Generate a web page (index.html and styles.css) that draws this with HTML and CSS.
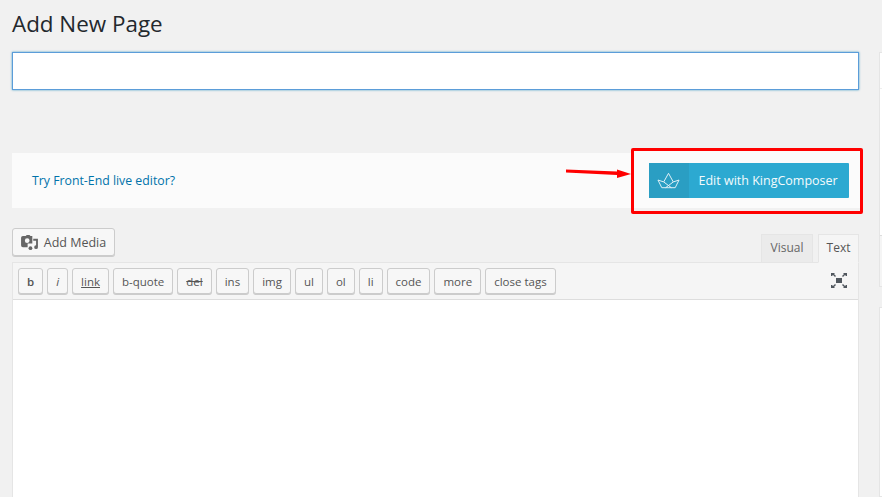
FILE: index.html
```html
<!DOCTYPE html>
<html lang="en">
<head>
  <meta charset="UTF-8" />
  <title>Add New Page</title>
  <link rel="stylesheet" href="styles.css">
</head>
<body>
  <div class="wrap">
    <div class="main">
      <h1>Add New Page</h1>
      <input type="text" class="title-input" />

      <div class="live-bar">
        <a class="live-link" href="#">Try Front-End live editor?</a>
        <div class="highlight">
          <svg class="arrow" width="66" height="14" viewBox="0 0 66 14">
            <path d="M0 3.5 L51 5.5 L51 3.5 L65 8 L51 12 L51 9 L0 6.5 Z" fill="#ff0000" />
          </svg>
          <a class="kc-button" href="#">
            <span class="kc-icon">
              <svg width="23" height="17" viewBox="0 0 24 17" fill="none" stroke="#e6f4f9" stroke-width="1">
                <path d="M1 8 L7 10 L12 1 L17 10 L23 8 L19 16 H5 Z" />
                <path d="M7 10 L15 16 M17 10 L9 16" />
              </svg>
            </span>
            <span class="kc-label">Edit with KingComposer</span>
          </a>
        </div>
      </div>

      <div class="media-row">
        <button class="media-button">
          <svg width="17" height="15" viewBox="0 0 18 16" fill="#666">
            <path d="M2 1 H5 L6 0 H9 L10 1 H12 V9 H7 V13 H2 Q0 13 0 11 V3 Q0 1 2 1 Z M6.5 3.5 A2.5 2.5 0 1 0 6.6 8.5 A2.5 2.5 0 1 0 6.5 3.5 Z" fill-rule="evenodd" />
            <path d="M13 4 H18 V13 A2 2 0 1 1 16 11 V6 H13 Z" />
            <circle cx="10" cy="14" r="2" />
          </svg>
          Add Media
        </button>
        <div class="tabs">
          <span class="tab tab-visual">Visual</span>
          <span class="tab tab-active">Text</span>
        </div>
      </div>

      <div class="editor">
        <div class="toolbar">
          <button class="tool tool-b">b</button>
          <button class="tool tool-i">i</button>
          <button class="tool tool-link">link</button>
          <button class="tool">b-quote</button>
          <button class="tool tool-del">del</button>
          <button class="tool">ins</button>
          <button class="tool">img</button>
          <button class="tool">ul</button>
          <button class="tool">ol</button>
          <button class="tool">li</button>
          <button class="tool">code</button>
          <button class="tool">more</button>
          <button class="tool">close tags</button>
          <svg class="fullscreen" width="16" height="15" viewBox="0 0 16 15" fill="#50575e">
            <rect x="5" y="5" width="6" height="5" />
            <path d="M0 0 H4 L3 1 L5 3 L4 4 L2 2 L1 3 H0 Z" />
            <path d="M16 0 H12 L13 1 L11 3 L12 4 L14 2 L15 3 H16 Z" />
            <path d="M0 15 H4 L3 14 L5 12 L4 11 L2 13 L1 12 H0 Z" />
            <path d="M16 15 H12 L13 14 L11 12 L12 11 L14 13 L15 12 H16 Z" />
          </svg>
        </div>
        <div class="editor-body"></div>
      </div>
    </div>

    <div class="side">
      <div class="side-box">
        <div class="side-head"></div>
        <div class="side-content"></div>
        <div class="side-foot"></div>
      </div>
      <div class="side-box side-box-next"></div>
    </div>
  </div>
</body>
</html>
```

FILE: styles.css
```css
html, body {
  margin: 0;
  padding: 0;
  height: 497px;
  overflow: hidden;
}
body {
  font-family: "Open Sans", Arial, sans-serif;
  background: #f1f1f1;
  color: #555;
}
.wrap {
  display: flex;
  height: 497px;
  overflow: hidden;
}
.main {
  width: 847px;
  margin-left: 12px;
  flex: none;
}
h1 {
  margin: 0;
  padding-top: 10px;
  height: 52px;
  box-sizing: border-box;
  font-size: 22.4px;
  line-height: 28px;
  font-weight: 400;
  color: #23282d;
}
.title-input {
  display: block;
  width: 100%;
  height: 38px;
  box-sizing: border-box;
  background: #fff;
  border: 1px solid #5b9dd9;
  box-shadow: 0 0 2px rgba(30,140,190,.8);
  outline: none;
}
.live-bar {
  margin-top: 63px;
  height: 55px;
  background: #fbfbfb;
  display: flex;
  align-items: center;
  justify-content: space-between;
  padding-left: 20px;
  position: relative;
}
.live-link {
  color: #0073aa;
  font-size: 12.3px;
  text-decoration: none;
}
.highlight {
  width: 232px;
  height: 66px;
  box-sizing: border-box;
  margin-right: -4px;
  margin-top: 1px;
  border: 3px solid #ff0000;
  border-radius: 2px;
  background: linear-gradient(#fbfbfb 57px, transparent 57px);
  display: flex;
  align-items: center;
  justify-content: center;
  position: relative;
}
.arrow {
  position: absolute;
  left: -68px;
  top: 15px;
}
.kc-button {
  width: 200px;
  height: 35px;
  margin-left: 3px;
  margin-top: -1px;
  background: #2ca9d1;
  color: #f4fbfd;
  border-radius: 1px;
  display: flex;
  align-items: center;
  text-decoration: none;
  font-size: 12.5px;
}
.kc-icon {
  width: 40px;
  height: 35px;
  background: #2a9ec3;
  display: flex;
  align-items: center;
  justify-content: center;
  flex: none;
}
.kc-label {
  margin-left: 10px;
  white-space: nowrap;
}
.media-row {
  margin-top: 20px;
  height: 34px;
  display: flex;
  justify-content: space-between;
  align-items: flex-end;
}
.media-button {
  height: 28px;
  width: 103px;
  margin-bottom: 6px;
  padding: 0;
  background: #f7f7f7;
  border: 1px solid #ccc;
  border-radius: 3px;
  box-shadow: 0 1px 0 #ccc;
  color: #555;
  font-family: inherit;
  font-size: 12.5px;
  display: flex;
  align-items: center;
  justify-content: center;
  gap: 6px;
}
.tabs {
  display: flex;
  gap: 5px;
  position: relative;
  top: 1px;
}
.tab {
  height: 29px;
  box-sizing: border-box;
  background: #ebebeb;
  border: 1px solid #e5e5e5;
  font-size: 12px;
  line-height: 26px;
  color: #666;
  text-align: center;
}
.tab-visual {
  width: 52px;
}
.tab-active {
  width: 41px;
  background: #f5f5f5;
  border-bottom-color: #f5f5f5;
  color: #555;
}
.editor {
  border: 1px solid #e5e5e5;
  border-bottom: 0;
  background: #fff;
}
.toolbar {
  height: 37px;
  box-sizing: border-box;
  background: #f5f5f5;
  border-bottom: 1px solid #ddd;
  padding: 5px 0 0 5px;
  display: flex;
  align-items: flex-start;
  gap: 4px;
  position: relative;
}
.tool {
  height: 26px;
  box-sizing: border-box;
  padding: 0 8px;
  background: #f7f7f7;
  border: 1px solid #ccc;
  border-radius: 3px;
  box-shadow: 0 1px 0 #ccc;
  color: #555;
  font-family: inherit;
  font-size: 11.5px;
}
.tool-b { font-weight: 600; }
.tool-i { font-style: italic; }
.tool-link { text-decoration: underline; }
.tool-del { text-decoration: line-through; }
.fullscreen {
  position: absolute;
  right: 11px;
  top: 10px;
}
.editor-body {
  height: 300px;
  background: #fff;
}
.side {
  margin-left: 20px;
  flex: 1;
  min-width: 0;
}
.side-box {
  background: #fff;
  border: 1px solid #e5e5e5;
  border-right: 0;
  box-sizing: border-box;
  margin-top: 52px;
  height: 235px;
}
.side-head {
  height: 35px;
  border-bottom: 1px solid #eee;
}
.side-content {
  height: 146px;
  border-bottom: 1px solid #ddd;
}
.side-foot {
  height: 50px;
  background: #f5f5f5;
}
.side-box-next {
  margin-top: 20px;
  height: 190px;
}
```
